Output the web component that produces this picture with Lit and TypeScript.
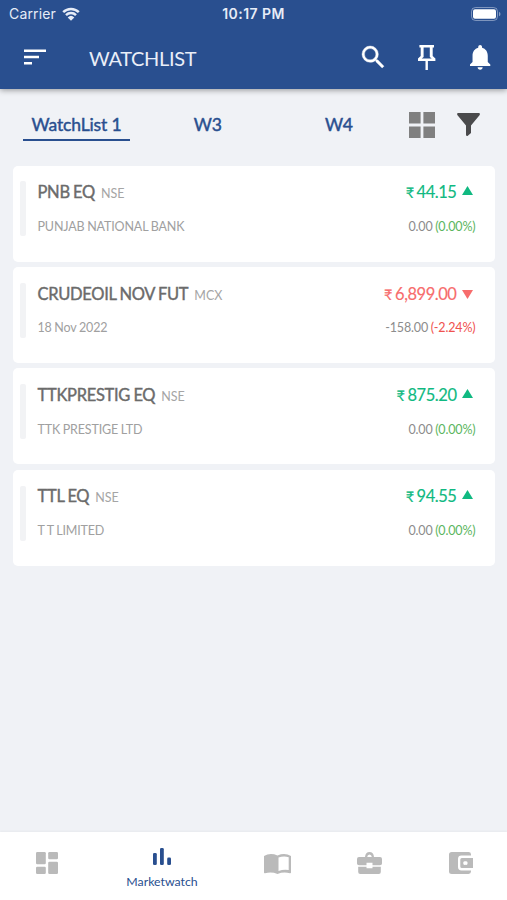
import { LitElement, html, css, svg, nothing } from "lit";
import { customElement, property } from "lit/decorators.js";

interface Quote {
  symbol: string;
  exchange: string;
  detail: string;
  price: string;
  change: string;
  percent: string;
  up: boolean;
}

const QUOTES: Quote[] = [
  { symbol: "PNB EQ", exchange: "NSE", detail: "PUNJAB NATIONAL BANK", price: "44.15", change: "0.00", percent: "(0.00%)", up: true },
  { symbol: "CRUDEOIL NOV FUT", exchange: "MCX", detail: "18 Nov 2022", price: "6,899.00", change: "-158.00", percent: "(-2.24%)", up: false },
  { symbol: "TTKPRESTIG EQ", exchange: "NSE", detail: "TTK PRESTIGE LTD", price: "875.20", change: "0.00", percent: "(0.00%)", up: true },
  { symbol: "TTL EQ", exchange: "NSE", detail: "T T LIMITED", price: "94.55", change: "0.00", percent: "(0.00%)", up: true },
];

// Each icon: tight viewBox, drawn width, drawn height, shape.
const ICONS: Record<string, { box: string; w: number; h: number; body: unknown }> = {
  wifi: {
    box: "0 0 18 14", w: 18, h: 14,
    body: svg`<path d="M1.2 5.1a11.2 11.2 0 0 1 15.6 0M4 8.1a7.2 7.2 0 0 1 10 0" fill="none" stroke="currentColor" stroke-width="2.5"/><path d="M9 13.8 5.7 10.4a4.8 4.8 0 0 1 6.6 0z"/>`,
  },
  battery: {
    box: "0 0 30 14", w: 30, h: 14,
    body: svg`<rect x=".5" y=".5" width="26" height="13" rx="4" fill="none" stroke="currentColor" opacity=".45"/><rect x="2" y="2.3" width="23" height="9.4" rx="2" fill="#fff"/><path d="M28 4.7a2.5 2.5 0 0 1 0 4.6z" opacity=".5"/>`,
  },
  menu: { box: "0 0 22 16", w: 22, h: 16, body: svg`<path d="M0 .4h22v2.5H0zM0 6.7h15v2.5H0zM0 13h8v2.5H0z"/>` },
  search: {
    box: "3 3 17.49 17.49", w: 22, h: 22,
    body: svg`<path stroke="currentColor" stroke-width=".3" d="M15.5 14h-.79l-.28-.27A6.471 6.471 0 0 0 16 9.5 6.5 6.5 0 1 0 9.5 16c1.61 0 3.09-.59 4.23-1.57l.27.28v.79l5 4.99L20.49 19l-4.99-5zm-6 0C7.01 14 5 11.99 5 9.5S7.01 5 9.5 5 14 7.01 14 9.5 11.99 14 9.5 14z"/>`,
  },
  pin: {
    box: "0 0 17.4 25", w: 17.4, h: 25,
    body: svg`<path fill-rule="evenodd" d="M1.4 0H16v2.5h-1.3V11l2.7 2.4V16H9.9v9H7.5v-9H0v-2.6L2.7 11V2.5H1.4zM5.6 2.5v9.4l-1.9 1.6h10L11.800 11.900V2.500z"/>`,
  },
  bell: {
    box: "4 2.5 16 19.5", w: 20.3, h: 24.7,
    body: svg`<path d="M12 22c1.1 0 2-.9 2-2h-4c0 1.1.89 2 2 2zm6-6v-5c0-3.07-1.64-5.64-4.5-6.32V4c0-.83-.67-1.5-1.5-1.5s-1.5.67-1.5 1.5v.68C7.63 5.36 6 7.92 6 11v5l-2 2v1h16v-1l-2-2z"/>`,
  },
  grid: {
    box: "0 0 26 26", w: 26, h: 26,
    body: svg`<path d="M0 0h11.6v11.6H0zM14.4 0H26v11.6H14.4zM0 14.4h11.6V26H0zM14.4 14.4H26V26H14.4z"/>`,
  },
  funnel: {
    box: "0 0 23 23", w: 23, h: 23,
    body: svg`<path d="M.8 0h21.4q1.2.7.5 1.9L14 12.6v7.5L10.5 23q-1.5.2-1.5-1.2v-9.2L.3 1.9Q-.4.7.8 0z"/>`,
  },
  up: { box: "0 0 11 9", w: 11, h: 9, body: svg`<path d="M5.5 0 11 9H0z"/>` },
  down: { box: "0 0 11 9", w: 11, h: 9, body: svg`<path d="M5.5 9 11 0H0z"/>` },
  dashboard: {
    box: "0 0 22 22", w: 22, h: 22,
    body: svg`<rect width="9.8" height="12.2" rx="1.2"/><rect x="12.2" width="9.8" height="7.3" rx="1.2"/><rect y="14.7" width="9.8" height="7.3" rx="1.2"/><rect x="12.2" y="9.8" width="9.8" height="12.2" rx="1.2"/>`,
  },
  chart: {
    box: "0 0 18 17", w: 18, h: 17,
    body: svg`<rect y="5" width="3.8" height="12" rx="1.3"/><rect x="7" width="3.8" height="17" rx="1.3"/><rect x="14.2" y="9.6" width="3.8" height="7.4" rx="1.3"/>`,
  },
  book: {
    box: "0 0 27 20", w: 27, h: 20,
    body: svg`<path fill-rule="evenodd" d="M0 2Q6-1.8 13.5 1.4 21-1.8 27 2V18.5q0 1-1 .8-6.5-1.8-12.5.7-6-2.5-12.5-.7-1 .2-1-.8zM14.5 3.6V17q5-2 10.2-1V3.2q-5-1.8-10.2.4z"/>`,
  },
  briefcase: {
    box: "0 0 25 22", w: 25, h: 22,
    body: svg`<path fill-rule="evenodd" d="M2 5h6Q8.5 0 12.5 0T17 5h6q2 0 2 2v4.500q0 1.700-2 1.700h-7.500v-2.400h-6v2.400H2q-2 0-2-1.700V7q0-2 2-2zM10.200 5h4.600q-.3-2.600-2.300-2.600T10.200 5z"/><path d="M1.200 14.700h8.300v1.600h6v-1.600h8.300V20q0 2-2 2H3.200q-2 0-2-2z"/>`,
  },
  wallet: {
    box: "0 0 24 22", w: 24, h: 22,
    body: svg`<path d="M2.8 0h16.7q2.5 0 2.5 2.4v1.2H12.5Q9 3.6 9 7v8q0 3.4 3.5 3.4H22v1.2q0 2.4-2.5 2.4H2.8Q0 22 0 19.5v-17Q0 0 2.8 0z"/><path fill-rule="evenodd" d="M12.8 6H24v10H12.8q-1.5 0-1.5-1.5v-7Q11.3 6 12.8 6zM16.4 9.3a1.8 1.8 0 1 0 .01 3.5 1.8 1.8 0 1 0-.01-3.5z"/>`,
  },
};

@customElement("ui-icon")
export class UiIcon extends LitElement {
  @property() name = "";

  static styles = css`
    :host { display: block; flex: none; line-height: 0; }
    svg { display: block; fill: currentColor; overflow: visible; }
  `;

  render() {
    const i = ICONS[this.name];
    return i
      ? html`<svg viewBox=${i.box} width=${i.w} height=${i.h} preserveAspectRatio="none">${i.body}</svg>`
      : nothing;
  }
}

@customElement("quote-card")
export class QuoteCard extends LitElement {
  @property({ attribute: false }) quote!: Quote;

  static styles = css`
    :host { display: block; height: 96px; background: #fff; border-radius: 5px; box-sizing: border-box; padding: 14.8px 19px 0 7px; }
    .body { display: flex; gap: 11.5px; }
    .marker { width: 6px; height: 55px; margin-top: 1.2px; border-radius: 2px; background: #f2f3f5; }
    .lines { flex: 1; }
    .line { display: flex; justify-content: space-between; align-items: baseline; white-space: pre; }
    .top { height: 24px; line-height: 24px; font-size: 16.5px; }
    .bottom { height: 20px; line-height: 20px; margin-top: 12.5px; font-size: 12.5px; letter-spacing: -0.15px; word-spacing: -0.4px; color: #a0a0a0; }
    .symbol { color: #6b6b6b; letter-spacing: -0.3px; word-spacing: -0.6px; -webkit-text-stroke: 0.4px #6b6b6b; }
    .exchange { font-size: 12.5px; color: #a5a5a5; margin-left: 6px; }
    .price { display: flex; align-items: baseline; padding-right: 3px; color: #10b981; letter-spacing: -0.45px; -webkit-text-stroke: 0.15px; }
    .price.down { color: #f76c6c; }
    .rupee { font-size: 14.5px; margin-right: 3px; }
    .arrow { margin-left: 5px; align-self: flex-start; padding-top: 6px; }
    .down .arrow { padding-top: 8px; }
    .change { color: #8c8c8c; }
    .percent { color: #5cb660; }
    .percent.down { color: #f0524f; }
  `;

  render() {
    const q = this.quote;
    const dir = q.up ? "up" : "down";
    return html`
      <div class="body">
        <div class="marker"></div>
        <div class="lines">
          <div class="line top">
            <div><span class="symbol">${q.symbol}</span><span class="exchange">${q.exchange}</span></div>
            <div class="price ${dir}"><span class="rupee">₹</span><span>${q.price}</span><ui-icon class="arrow" name=${dir}></ui-icon></div>
          </div>
          <div class="line bottom">
            <span>${q.detail}</span>
            <span class="change">${q.change} <span class="percent ${dir}">${q.percent}</span></span>
          </div>
        </div>
      </div>
    `;
  }
}

@customElement("app-root")
export class AppRoot extends LitElement {
  static styles = css`
    :host { display: flex; flex-direction: column; width: 507px; height: 900px; background: #f0f2f6; font-family: Lato, "Noto Sans", sans-serif; overflow: hidden; }
    header { height: 88.5px; flex: none; background: #294f8f; color: #fff; box-shadow: 0 1px 6px rgba(0, 0, 0, 0.4); }
    .status { display: grid; grid-template-columns: 1fr auto 1fr; align-items: center; height: 27px; padding: 0 6px 0 9px; font-family: Inter, sans-serif; font-size: 14px; color: #e6ecf7; }
    .carrier { display: flex; align-items: center; gap: 6px; letter-spacing: 0.15px; }
    .time { font-weight: 600; font-size: 14px; letter-spacing: 0.45px; margin-right: 3px; }
    .battery { justify-self: end; }
    .bar { display: flex; align-items: center; height: 60px; padding: 0 17px 0 24px; box-sizing: border-box; }
    .title { margin-left: 43px; padding-top: 1px; flex: 1; font-size: 20px; letter-spacing: -0.35px; color: #e9eef8; }
    .actions { display: flex; align-items: center; gap: 34px; }
    .tabs { display: flex; align-items: flex-start; height: 76.5px; flex: none; padding-left: 23px; box-sizing: border-box; color: #294f8f; font-size: 17.5px; line-height: 25px; letter-spacing: -0.15px; -webkit-text-stroke: 0.45px #294f8f; }
    .tab { margin-top: 23.5px; width: 107px; height: 29px; text-align: center; box-sizing: border-box; }
    .active { border-bottom: 2px solid #294f8f; }
    .w3, .w4 { margin-left: 24.2px; }
    .grid { color: #808080; margin: 23px 0 0 16.2px; }
    .funnel { color: #4a4a4c; margin: 24.5px 0 0 22px; }
    .list { flex: 1; display: flex; flex-direction: column; gap: 5.4px; padding: 0.5px 12.5px 0 13px; }
    nav { display: grid; grid-template-columns: 93fr 138fr 92fr 92fr 92fr; height: 68px; flex: none; background: #fff; color: #bababa; box-shadow: 0 -1px 2px rgba(0, 0, 0, 0.04); }
    .item { display: flex; flex-direction: column; align-items: center; padding-top: 20px; }
    .book { padding-top: 22px; }
    .current { padding-top: 16px; color: #294f8f; font-size: 12.3px; line-height: 16px; }
    .label { margin-top: 9px; }
  `;

  render() {
    return html`
      <header>
        <div class="status">
          <div class="carrier"><span>Carrier</span><ui-icon name="wifi"></ui-icon></div>
          <div class="time">10:17 PM</div>
          <ui-icon class="battery" name="battery"></ui-icon>
        </div>
        <div class="bar">
          <ui-icon name="menu"></ui-icon>
          <div class="title">WATCHLIST</div>
          <div class="actions">
            <ui-icon name="search"></ui-icon>
            <ui-icon name="pin"></ui-icon>
            <ui-icon name="bell"></ui-icon>
          </div>
        </div>
      </header>
      <div class="tabs">
        <div class="tab active">WatchList 1</div>
        <div class="tab w3">W3</div>
        <div class="tab w4">W4</div>
        <ui-icon class="grid" name="grid"></ui-icon>
        <ui-icon class="funnel" name="funnel"></ui-icon>
      </div>
      <div class="list">${QUOTES.map((q) => html`<quote-card .quote=${q}></quote-card>`)}</div>
      <nav>
        <div class="item"><ui-icon name="dashboard"></ui-icon></div>
        <div class="item current"><ui-icon name="chart"></ui-icon><span class="label">Marketwatch</span></div>
        <div class="item book"><ui-icon name="book"></ui-icon></div>
        <div class="item"><ui-icon name="briefcase"></ui-icon></div>
        <div class="item"><ui-icon name="wallet"></ui-icon></div>
      </nav>
    `;
  }
}
